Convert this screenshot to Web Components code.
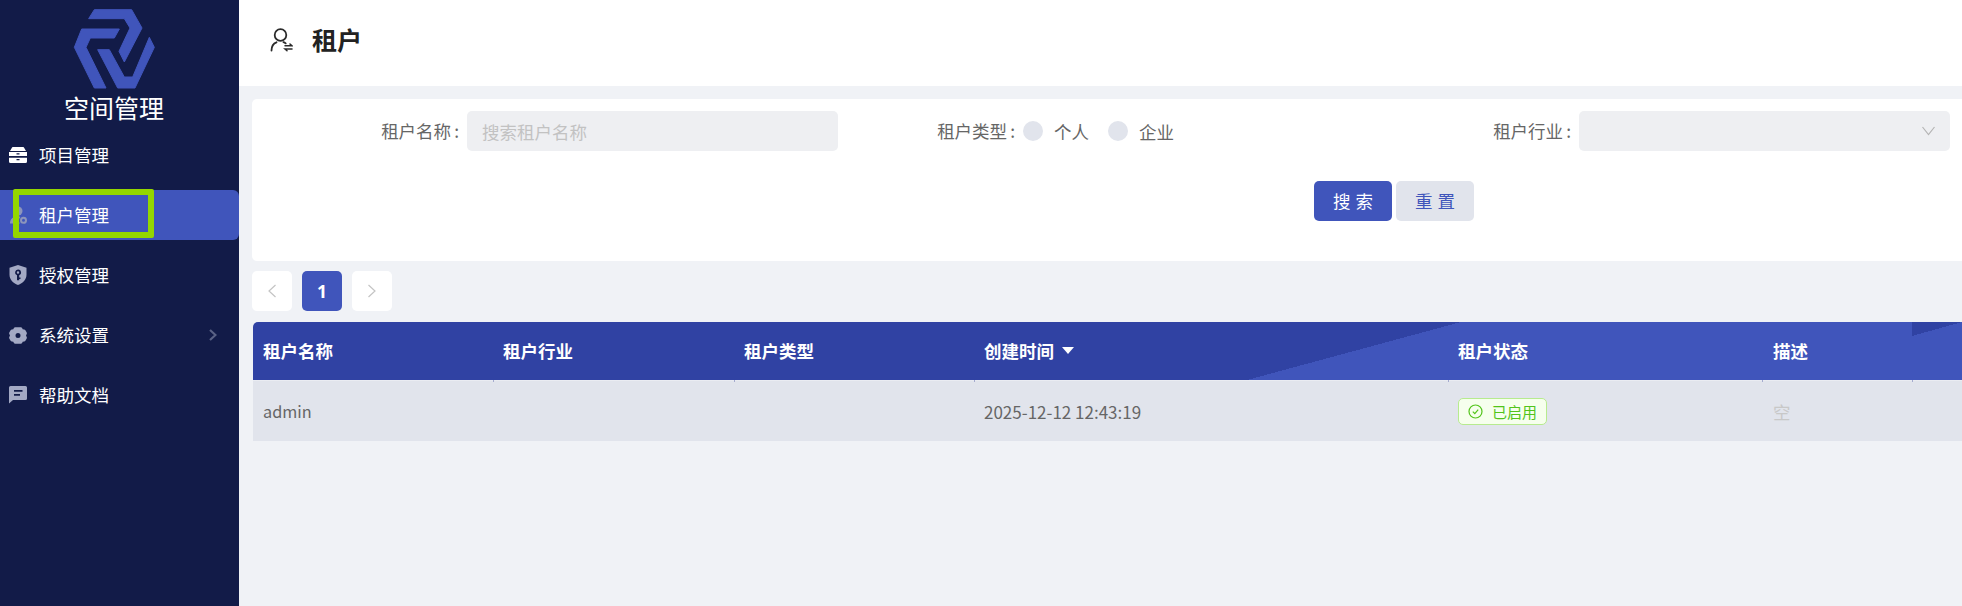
<!DOCTYPE html>
<html lang="zh"><head><meta charset="utf-8"><title>租户</title>
<style>
html,body{margin:0;padding:0;width:1962px;height:606px;overflow:hidden;background:#f0f2f6;font-family:"Noto Sans CJK SC","Noto Sans",sans-serif}
</style></head><body>
<app-shell>
  <app-sidebar slot="side" title-text="空间管理">
    <nav-item label="项目管理"><svg slot="icon" width="18" height="16" viewBox="0 0 18 16" fill="#fff"><path d="M4.5 0h9c1 0 1.6.5 1.900 1.300L17 4H1l1.600-2.700C2.900.5 3.500 0 4.500 0z"/><path fill-rule="evenodd" d="M0 5h18v4H0zM7.500 6.200v1.300h3V6.200z"/><path fill-rule="evenodd" d="M0 10.800h18v3.700a1.500 1.500 0 0 1-1.500 1.500h-15A1.500 1.500 0 0 1 0 14.500zM7.500 12v1.300h3V12z"/></svg></nav-item>
    <nav-item label="租户管理" active><svg slot="icon" width="18" height="18" viewBox="0 0 18 18" fill="#8d95bb"><circle cx="9" cy="5" r="4.500"/><path d="M1 17.500c0-4.500 3-7 8-7 1 0 1.800.1 2.400.4-1 1-1.600 2.300-1.600 3.700 0 1.100.3 2.100 1 2.900z"/><path fill-rule="evenodd" d="M14.500 10.800a3.500 3.500 0 1 1 0 7 3.500 3.500 0 0 1 0-7zm0 2a1.500 1.500 0 1 0 0 3 1.500 1.500 0 0 0 0-3z"/></svg></nav-item>
    <nav-item label="授权管理"><svg slot="icon" width="18" height="20" viewBox="0 0 18 20" fill="#a3a9c4"><path fill-rule="evenodd" d="M9 0l8.500 2.800v7c0 4.800-3.500 8.300-8.500 10.200C4 18.100.5 14.600.5 9.800v-7zM9 4.500a3 3 0 0 0-1 5.800v5h2.200v-1.300h1.300v-1.500h-1.300v-2.200A3 3 0 0 0 9 4.500zm0 1.800a1.200 1.200 0 1 1 0 2.400 1.200 1.200 0 0 1 0-2.400z"/></svg></nav-item>
    <nav-item label="系统设置" arrow><svg slot="icon" width="18" height="17" viewBox="0 0 18 17" fill="#a3a9c4"><path fill-rule="evenodd" d="M6.200.3h5.600c.6 0 1 .3 1.300.8l.6 1.100 1.400.2c.6.1 1 .4 1.300.9l1.300 2.300c.3.500.3 1 0 1.500L17 8.500l.7 1.400c.3.500.3 1 0 1.500l-1.300 2.300c-.3.5-.7.8-1.300.9l-1.400.2-.6 1.100c-.3.5-.7.800-1.300.8H6.200c-.6 0-1-.3-1.300-.8l-.6-1.100-1.400-.2c-.6-.1-1-.4-1.300-.9L.3 11.400c-.3-.5-.3-1 0-1.500L1 8.500.3 7.100c-.3-.5-.3-1 0-1.500l1.300-2.300c.3-.5.7-.8 1.300-.9l1.400-.2.6-1.100c.3-.5.7-.8 1.300-.8zM9 6a2.500 2.500 0 1 0 0 5 2.500 2.500 0 0 0 0-5z"/></svg></nav-item>
    <nav-item label="帮助文档"><svg slot="icon" width="18" height="18" viewBox="0 0 18 18" fill="#a3a9c4"><path fill-rule="evenodd" d="M1.500 0h15A1.500 1.500 0 0 1 18 1.500v11a1.500 1.500 0 0 1-1.500 1.500H4l-4 3.500V1.500A1.500 1.500 0 0 1 1.500 0zM5 4v1.800h8.500V4zm0 4v1.800h6V8z"/></svg></nav-item>
  </app-sidebar>
  <page-header slot="head" title-text="租户"></page-header>
  <search-panel slot="main"></search-panel>
  <page-nav slot="main" current="1"></page-nav>
  <tenant-table slot="main"></tenant-table>
</app-shell>
<script>
function def(name,html,init){
  customElements.define(name,class extends HTMLElement{
    constructor(){super();this.attachShadow({mode:'open'}).innerHTML=html;}
    connectedCallback(){if(init)init.call(this,this.shadowRoot);}
  });
}
def('app-shell',`<style>
:host{display:flex;width:1962px;height:606px;overflow:hidden}
.side{flex:0 0 239px;display:block}
.right{flex:1;min-width:0;display:flex;flex-direction:column}
.body{flex:1;padding:13px 0 0 13px;min-width:0;overflow:hidden}
</style><div class="side"><slot name="side"></slot></div>
<div class="right"><slot name="head"></slot><div class="body"><slot name="main"></slot></div></div>`);

def('app-sidebar',`<style>
:host{display:block;height:606px;background:#121b48;color:#fff;box-sizing:border-box;position:relative}
.brand{display:flex;flex-direction:column;align-items:center;padding:8px 11px 0 0;height:130px;box-sizing:border-box}
svg{display:block}
.t{font-size:25px;line-height:30px;margin-top:3px;height:30px}
nav{display:flex;flex-direction:column;gap:10px}
.mark{position:absolute;left:13px;top:189px;width:141px;height:49px;box-sizing:border-box;border:6px solid #94d600;border-radius:2px;pointer-events:none}
</style>
<div class="brand"><svg width="82" height="81" viewBox="36 25 246 243" fill="#4055bb" stroke="#4055bb" stroke-width="3">
<path d="M100 30H212L243 85 190 187 174 155 207 85 190 57H83z"/>
<path d="M62 88H175L160 115H88L75 143 135 265H100L40 143z"/>
<path d="M110 150H145L190 232H215L265 113 280 143 222 265H170z"/>
</svg><div class="t"></div></div>
<nav><slot></slot></nav><div class="mark"></div>`,function(s){s.querySelector('.t').textContent=this.getAttribute('title-text');});

def('nav-item',`<style>
:host{display:flex;align-items:center;height:50px;box-sizing:border-box;padding-left:9px;border-radius:0 6px 6px 0;font-size:17.5px;color:#fff}
:host([active]){background:#4055bb}
.ic{width:18px;height:20px;display:flex;align-items:center;justify-content:center;margin-right:12px}
.lb{flex:1;line-height:24px;margin-top:-1px}
.ar{display:none;margin-right:22px}
:host([arrow]) .ar{display:block}
</style><span class="ic"><slot name="icon"></slot></span><span class="lb"></span>
<svg class="ar" width="8" height="12" viewBox="0 0 8 12" fill="none" stroke="#5a6285" stroke-width="2.200"><path d="M1 1l5.500 5L1 11"/></svg>`,function(s){s.querySelector('.lb').textContent=this.getAttribute('label');});

def('page-header',`<style>
:host{display:flex;align-items:center;height:86px;flex:0 0 86px;background:#fff;padding-left:31px;box-sizing:border-box;color:#222}
h1{font-size:25px;line-height:30px;font-weight:700;margin:-8px 0 0 19px;color:#222}
svg{display:block;margin-top:-6px}
</style><svg width="23" height="24" viewBox="0 0 23 24" fill="none" stroke="#2a2a2a" stroke-width="1.800" stroke-linecap="round"><circle cx="10.500" cy="7" r="5.800"/><path d="M1.500 22.500c0-4 1.800-7 5-8.200M13.500 14.200c1 .3 1.600.7 2.200 1.200"/><path d="M15 17.800h7l-2-1.800M22 21h-7l2 1.800" stroke-width="1.500"/></svg><h1></h1>`,function(s){s.querySelector('h1').textContent=this.getAttribute('title-text');});

def('form-field',`<style>
:host{display:flex;align-items:center;height:40px;font-size:17.5px;color:#666}
label{width:100px;flex:0 0 100px;text-align:right;white-space:nowrap;margin-right:8px;line-height:24px}
label span{margin-left:3px}
.c{flex:0 0 371px;width:371px}
</style><label><b style="font-weight:400"></b><span>:</span></label><div class="c"><slot></slot></div>`,function(s){s.querySelector('b').textContent=this.getAttribute('label');});

def('text-box',`<style>
:host{display:flex;align-items:center;height:40px;background:#eeeff2;border-radius:5px;padding:0 15px;box-sizing:border-box;color:#c2c2c2;font-size:17.5px}
</style><slot></slot>`);

def('select-box',`<style>
:host{display:flex;align-items:center;justify-content:flex-end;height:40px;background:#eeeff2;border-radius:5px;padding-right:15px;box-sizing:border-box}
svg{display:block}
</style><svg width="13" height="10" viewBox="0 0 13 10" fill="none" stroke="#b4b4b4" stroke-width="1.200"><path d="M.5 1l6 7.500 6-7.500"/></svg>`);

def('radio-opt',`<style>
:host{display:inline-flex;align-items:center;font-size:17.5px;color:#666;margin-right:19px;height:40px}
i{display:block;width:20px;height:20px;border-radius:50%;background:#e1e4ec;margin-right:11px}
</style><i></i><slot></slot>`);

def('action-button',`<style>
:host{display:flex;align-items:center;justify-content:center;width:78px;height:40px;border-radius:5px;font-size:17.5px;letter-spacing:5px;background:#e1e4ec;color:#4055bb;box-sizing:border-box;padding:0 0 2px 5px}
:host([primary]){background:#4055bb;color:#fff}
</style><slot></slot>`);

def('search-panel',`<style>
:host{display:block;width:1710px;height:162px;background:#fff;border-radius:5px 0 0 5px;box-sizing:border-box;padding:12px 0 0 107px}
.row{display:grid;grid-template-columns:556px 556px 556px}
.btns{display:flex;gap:4px;margin:30px 0 0 955px}
</style>
<div class="row">
<form-field label="租户名称"><text-box>搜索租户名称</text-box></form-field>
<form-field label="租户类型"><radio-opt>个人</radio-opt><radio-opt>企业</radio-opt></form-field>
<form-field label="租户行业"><select-box></select-box></form-field>
</div>
<div class="btns"><action-button primary>搜索</action-button><action-button>重置</action-button></div>`);

def('page-nav',`<style>
:host{display:flex;gap:10px;margin:10px 0 11px;height:40px}
.b{width:40px;height:40px;border-radius:5px;background:#fff;display:flex;align-items:center;justify-content:center}
.on{background:#4055bb;color:#fff;font:700 17.5px "Noto Sans",sans-serif}
svg{display:block}
</style>
<div class="b"><svg width="10" height="14" viewBox="0 0 10 14" fill="none" stroke="#c4c4c4" stroke-width="1.200"><path d="M8.500 1L2 7l6.500 6"/></svg></div>
<div class="b on">1</div>
<div class="b"><svg width="10" height="14" viewBox="0 0 10 14" fill="none" stroke="#c4c4c4" stroke-width="1.200"><path d="M1.500 1L8 7l-6.500 6"/></svg></div>`);

def('status-tag',`<style>
:host{display:inline-flex;align-items:center;height:27px;width:89px;box-sizing:border-box;background:#f6ffed;border:1px solid #b7eb8f;border-radius:5px;color:#52c41a;font-size:15px;padding-left:9px}
svg{display:block;margin-right:9px}
</style><svg width="15" height="15" viewBox="0 0 15 15" fill="none" stroke="#52c41a" stroke-width="1.200"><circle cx="7.500" cy="7.500" r="6.500"/><path d="M4.800 7.700l2 2 3.400-4"/></svg><slot></slot>`);

def('tenant-table',`<style>
:host{display:block;width:1709px;margin-left:1px;font-size:17.5px}
.r{display:grid;grid-template-columns:240px 241px 240px 474px 314px 150px 50px}
.h{height:58px;color:#fff;font-weight:700;background-color:#4055bb;background-repeat:no-repeat;
 background-image:linear-gradient(to bottom right,#3042a3 50%,#4055bb 50%),linear-gradient(to bottom right,#3042a3 50%,#4055bb 50%),linear-gradient(#3042a3,#3042a3);
 background-size:50px 14px,214px 58px,994px 58px;background-position:1659px 0,994px 0,0 0;border-radius:5px 0 0 0}
.h .c{padding-bottom:2px;box-sizing:border-box}
.sep{height:1px;background:#eaecf2}
.b{height:60px;background:#e1e4ec;color:#666}
.c{display:flex;align-items:center;padding-left:10px;position:relative;white-space:nowrap;min-width:0}
.c:not(:first-child)::before{content:"";position:absolute;left:0;width:1px;background:#a5abcf}
.h .c:not(:first-child)::before{bottom:-2px;height:2px}
.c.w{padding-left:11px}
.tri{display:inline-block;width:0;height:0;border:6px solid transparent;border-top:7px solid #fff;border-bottom:0;margin-left:8px}
.e{color:#c8c8c8}
.d{font-size:16.250px}
.t{font-size:17px}
</style>
<div class="r h"><div class="c">租户名称</div><div class="c">租户行业</div><div class="c">租户类型</div><div class="c">创建时间<span class="tri"></span></div><div class="c">租户状态</div><div class="c w">描述</div><div class="c"></div></div>
<div class="sep"></div>
<div class="r b"><div class="c d">admin</div><div class="c"></div><div class="c"></div><div class="c t">2025-12-12 12:43:19</div><div class="c"><status-tag>已启用</status-tag></div><div class="c e w">空</div><div class="c"></div></div>`);
</script>
</body></html>
